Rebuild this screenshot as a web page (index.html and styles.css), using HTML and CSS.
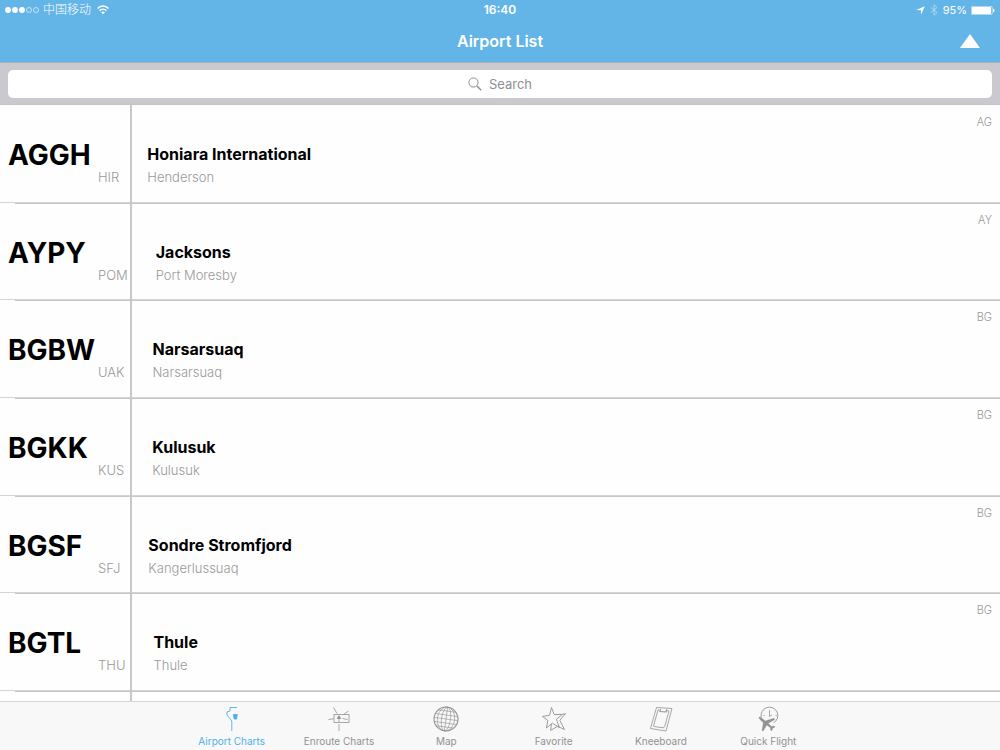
FILE: index.html
```
<!DOCTYPE html>
<html lang="en">
<head>
    <meta charset="UTF-8">
    <meta name="viewport" content="width=device-width, initial-scale=1.0">
    <title>Airport List</title>
    <link rel="stylesheet" href="styles.css">
</head>
<body>
    <header class="header">
        <div class="status-bar">
            <div class="status-left">
                <svg class="signal" width="34" height="6" viewBox="0 0 34 6">
                    <g fill="#fff">
                        <circle cx="3" cy="3" r="2.9"/>
                        <circle cx="10" cy="3" r="2.9"/>
                        <circle cx="17" cy="3" r="2.9"/>
                    </g>
                    <g fill="none" stroke="#fff" stroke-width="0.6">
                        <circle cx="24" cy="3" r="2.5"/>
                        <circle cx="31" cy="3" r="2.5"/>
                    </g>
                </svg>
                <span class="carrier" lang="zh">中国移动</span>
                <svg class="wifi" width="12" height="10" viewBox="0 0 12 10">
                    <g fill="none" stroke="#fff" stroke-width="1.5">
                        <path d="M0.6 3.4C3.6 0.3 8.4 0.3 11.4 3.4"/>
                        <path d="M2.6 5.6C4.5 3.7 7.5 3.7 9.4 5.6"/>
                    </g>
                    <path d="M6 9.3L4.1 7.3C5.2 6.2 6.8 6.2 7.9 7.3Z" fill="#fff"/>
                </svg>
            </div>
            <time class="clock">16:40</time>
            <div class="status-right">
                <svg width="9" height="9" viewBox="0 0 9 9">
                    <path d="M8.8 0.2L5 8.8V4.2L0.2 4.1Z" fill="#fff"/>
                </svg>
                <svg class="bluetooth" width="8" height="12" viewBox="0 0 8 12">
                    <path d="M0.8 3.4L7 8.5L4 11.3V0.7L7 3.5L0.8 8.6" fill="none" stroke="#fff" stroke-width="0.9"/>
                </svg>
                <span class="percent">95%</span>
                <svg width="24" height="9" viewBox="0 0 24 9">
                    <rect x="0.3" y="0.3" width="20.9" height="8.4" rx="1.2" fill="none" stroke="#fff" stroke-width="0.6"/>
                    <rect x="1" y="1" width="19" height="7" rx="0.6" fill="#fff"/>
                    <path d="M22 2.8C24.2 3.2 24.2 5.8 22 6.2Z" fill="#fff"/>
                </svg>
            </div>
        </div>
        <div class="nav-bar">
            <h1 class="title">Airport List</h1>
            <button class="sort" type="button" aria-label="Back to top">
                <svg width="20" height="14" viewBox="0 0 20 14">
                    <path d="M10 0L20 14H0Z" fill="#fff"/>
                </svg>
            </button>
        </div>
    </header>

    <div class="search-bar">
        <label class="search-box">
            <svg width="14" height="14" viewBox="0 0 14 14" fill="none" stroke="#8e8e93">
                <circle cx="5.5" cy="5.5" r="4.6" stroke-width="1"/>
                <path d="M8.9 8.9L13.2 13.2" stroke-width="1.4"/>
            </svg>
            <input class="search-input" type="text" placeholder="Search" aria-label="Search">
        </label>
    </div>

    <ul class="airports">
        <li class="airport">
            <div class="icao">AGGH</div>
            <div class="iata">HIR</div>
            <div class="info">
                <div class="name">Honiara International</div>
                <div class="city">Henderson</div>
            </div>
            <div class="region">AG</div>
        </li>
        <li class="airport">
            <div class="icao">AYPY</div>
            <div class="iata">POM</div>
            <div class="info">
                <div class="name">Jacksons</div>
                <div class="city">Port Moresby</div>
            </div>
            <div class="region">AY</div>
        </li>
        <li class="airport">
            <div class="icao">BGBW</div>
            <div class="iata">UAK</div>
            <div class="info">
                <div class="name">Narsarsuaq</div>
                <div class="city">Narsarsuaq</div>
            </div>
            <div class="region">BG</div>
        </li>
        <li class="airport">
            <div class="icao">BGKK</div>
            <div class="iata">KUS</div>
            <div class="info">
                <div class="name">Kulusuk</div>
                <div class="city">Kulusuk</div>
            </div>
            <div class="region">BG</div>
        </li>
        <li class="airport">
            <div class="icao">BGSF</div>
            <div class="iata">SFJ</div>
            <div class="info">
                <div class="name">Sondre Stromfjord</div>
                <div class="city">Kangerlussuaq</div>
            </div>
            <div class="region">BG</div>
        </li>
        <li class="airport">
            <div class="icao">BGTL</div>
            <div class="iata">THU</div>
            <div class="info">
                <div class="name">Thule</div>
                <div class="city">Thule</div>
            </div>
            <div class="region">BG</div>
        </li>
        <li class="airport next"></li>
    </ul>

    <nav class="tab-bar">
        <div class="tabs">
            <a class="tab active" href="#charts">
                <svg width="26" height="26" viewBox="0 0 26 26" fill="none" stroke="currentColor" stroke-width="0.9">
                    <path d="M18 1.5H11V5L8 6V9L12.8 15V25"/>
                    <path d="M14.3 8.5H18.3L17.5 13H15.2Z" fill="currentColor"/>
                </svg>
                <span>Airport Charts</span>
            </a>
            <a class="tab" href="#enroute">
                <svg width="26" height="26" viewBox="0 0 26 26" fill="none" stroke="currentColor" stroke-width="0.8">
                    <rect x="8" y="8.5" width="15" height="8"/>
                    <path d="M7.5 1.5L11 7.5M22.5 5L17.5 8.5M2.5 13.5L8 12.7M13 18V25M13 11V16M16.5 12.5L21.5 13.5"/>
                    <path d="M13 9.7L14.8 12.5H11.2Z" fill="currentColor"/>
                </svg>
                <span>Enroute Charts</span>
            </a>
            <a class="tab" href="#map">
                <svg width="26" height="26" viewBox="0 0 26 26" fill="none" stroke="currentColor" stroke-width="0.6">
                    <circle cx="13" cy="13" r="12" stroke-width="1.1"/>
                    <g transform="rotate(8 13 13)">
                        <path d="M13 1V25M1 13H25M1.8 9H24.2M1.8 17H24.2M4 5H22M4 21H22"/>
                        <ellipse cx="13" cy="13" rx="4.5" ry="12"/>
                        <ellipse cx="13" cy="13" rx="8.7" ry="12"/>
                    </g>
                </svg>
                <span>Map</span>
            </a>
            <a class="tab" href="#favorite">
                <svg width="26" height="26" viewBox="0 0 26 26" fill="none" stroke="currentColor" stroke-width="0.9">
                    <path d="M10.5 1.5L13.2 8.6L21.5 8.3L15.4 13.3L18.4 21.5L11.3 17.2L5.4 22L6.9 14.5L1.5 10.4L8.5 9.3Z"/>
                    <path d="M21.5 8.3L24.5 7.7L18.8 14.3L23.5 23.5L16.5 20.3L9.7 24.4L10.4 18"/>
                </svg>
                <span>Favorite</span>
            </a>
            <a class="tab" href="#kneeboard">
                <svg width="26" height="26" viewBox="0 0 26 26" fill="none" stroke="currentColor" stroke-width="0.8">
                    <path d="M8.5 1.5L24 2.5L18 25L2.5 22.5Z"/>
                    <path d="M11.5 4L10 4L5.5 20L8 20.8L15.5 21.8L17 19.5L21 5L18.5 4.5"/>
                    <path d="M12.5 3L12 5.5L18 6L18.7 3.5" stroke-width="1.1"/>
                </svg>
                <span>Kneeboard</span>
            </a>
            <a class="tab" href="#flight">
                <svg width="26" height="26" viewBox="0 0 26 26" fill="none" stroke="currentColor" stroke-width="0.9">
                    <path d="M6.3 11.5A8.4 8.4 0 1 1 18.5 16.9"/>
                    <path d="M14.5 4V10.5L17 8.8M8.5 9.5H9.8M20.5 9.5H21.8" stroke-width="0.8"/>
                    <path d="M4.2 11.1C5 10.8 6.2 11.6 7.2 12.5L10.2 15L19 12.2L19.8 13.5L13.2 17.3L16.4 20.4L19.3 20L20 21L17.6 22.3L16.8 24.8L15.7 24.3L15.5 21.8L11.7 19L8.2 25L7 24.5L8.4 16.8L5.2 13.7C4.3 12.7 3.7 11.5 4.2 11.1Z" fill="currentColor" stroke-width="0.4"/>
                </svg>
                <span>Quick Flight</span>
            </a>
        </div>
    </nav>
</body>
</html>
```
FILE: styles.css
```
* {
    box-sizing: border-box;
}

body {
    margin: 0;
    height: 100vh;
    display: flex;
    flex-direction: column;
    background-color: #fefefe;
    color: #000;
    font-family: Inter, "Noto Sans CJK SC", sans-serif;
}

svg {
    display: block;
    flex: none;
}

/* Header */
.header {
    background-color: #64b5e7;
    color: #fff;
}

.status-bar {
    display: grid;
    grid-template-columns: 1fr auto 1fr;
    align-items: center;
    height: 20px;
    padding: 0 5px;
    font-size: 12px;
    line-height: 20px;
}

.status-left,
.status-right {
    display: flex;
    align-items: center;
    gap: 4px;
}

.carrier {
    font-weight: 300;
}

.wifi {
    margin-left: 2px;
}

.clock {
    font-weight: 600;
}

.status-right {
    justify-content: flex-end;
}

.bluetooth {
    opacity: 0.5;
    margin: 0 1px;
}

.percent {
    font-size: 11px;
}

.nav-bar {
    display: grid;
    grid-template-columns: 1fr auto 1fr;
    align-items: center;
    height: 42px;
    padding: 0 20px;
}

.title {
    grid-column: 2;
    margin: 0;
    font-size: 16px;
    font-weight: 600;
    line-height: 20px;
}

.sort {
    justify-self: end;
    padding: 0;
    border: none;
    background: none;
    cursor: pointer;
}

/* Search */
.search-bar {
    padding: 7px 8px 6px;
    background-color: #c9c9cf;
    border-top: 1px solid #a0b1bf;
    border-bottom: 1px solid #c4c4c8;
}

.search-box {
    display: flex;
    justify-content: center;
    align-items: center;
    gap: 7px;
    height: 28px;
    border-radius: 5px;
    background-color: #fff;
}

.search-input {
    field-sizing: content;
    padding: 0;
    border: none;
    outline: none;
    background: none;
    font-family: inherit;
    font-size: 13px;
    line-height: 20px;
}

.search-input::placeholder {
    color: #8e8e93;
}

/* Airport list */
.airports {
    flex: 1;
    display: flex;
    flex-direction: column;
    min-height: 0;
    margin: 0;
    padding: 0;
    list-style: none;
    overflow: hidden;
}

.airport {
    position: relative;
    flex: 1;
    display: flex;
    align-items: flex-start;
    padding: 0 8px;
    border-bottom: 1px solid #d4d4d4;
}

.airport.next {
    flex: 0 0 10px;
    border-bottom: none;
}

/* column rule between the codes and the names */
.airport::before {
    content: "";
    position: absolute;
    top: 0;
    bottom: -1px;
    left: 130px;
    width: 2px;
    background-color: #c8c8c8;
}

/* inset separator under each row */
.airport:not(.next)::after {
    content: "";
    position: absolute;
    right: 0;
    bottom: -2px;
    left: 15px;
    height: 1px;
    background-color: #c8c8c8;
}

.icao {
    width: 90px;
    padding-top: 32px;
    font-size: 28px;
    font-weight: 700;
    line-height: 36px;
}

.iata {
    padding-top: 63px;
    margin-right: 28px;
    color: #999;
    font-size: 13px;
    font-weight: 300;
    line-height: 18px;
}

.info {
    flex: 1;
    padding-top: 39px;
}

.name {
    font-size: 16px;
    font-weight: 700;
    line-height: 20px;
}

.city {
    margin-top: 4px;
    color: #999;
    font-size: 13px;
    font-weight: 300;
    line-height: 18px;
}

.region {
    padding-top: 9px;
    color: #999;
    font-size: 11px;
    font-weight: 300;
    line-height: 16px;
}

/* Tab bar */
.tab-bar {
    display: flex;
    justify-content: center;
    background-color: #f8f8f8;
    border-top: 1px solid #d6d6d6;
}

.tabs {
    display: flex;
    width: 100%;
    max-width: 644px;
}

.tab {
    flex: 1;
    display: flex;
    flex-direction: column;
    align-items: center;
    gap: 3px;
    padding: 4px 0 2px;
    color: #929292;
    font-size: 10px;
    line-height: 13px;
    text-decoration: none;
}

.tab.active {
    color: #4fb0e8;
}
```
